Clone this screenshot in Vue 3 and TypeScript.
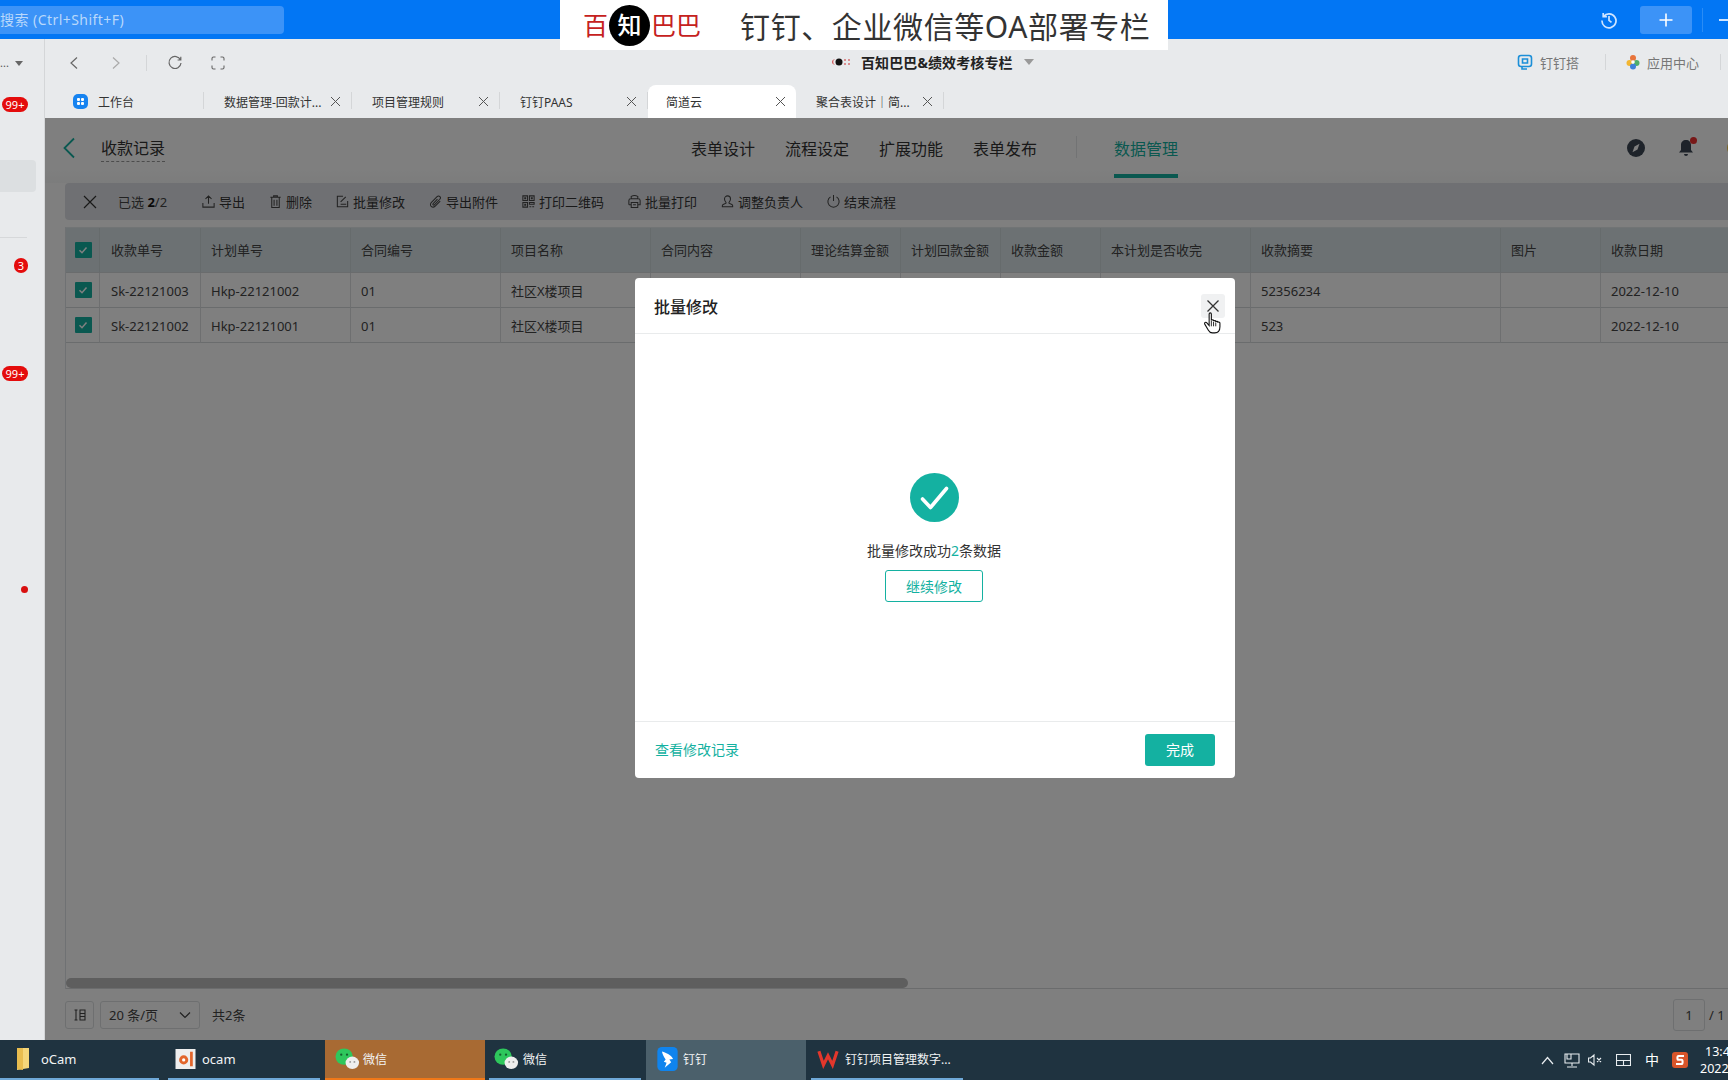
<script setup lang="ts">
interface TabItem { label: string; active?: boolean; home?: boolean }
interface ToolItem { label: string; icon: string }
interface TaskItem { label: string; kind: string; state?: string }

const tabs: TabItem[] = [
  { label: '工作台', home: true },
  { label: '数据管理-回款计...' },
  { label: '项目管理规则' },
  { label: '钉钉PAAS' },
  { label: '简道云', active: true },
  { label: '聚合表设计｜简...' },
]
const navItems = ['表单设计', '流程设定', '扩展功能', '表单发布']
const tools: ToolItem[] = [
  { label: '导出', icon: 'M8 10.500V2M4.800 5.200 8 2l3.200 3.200M2 9.500v4.500h12V9.500' },
  { label: '删除', icon: 'M2.500 3.500h11M6 3.500V2h4v1.500M4 3.500v11h8v-11M6.500 6v6.500M9.500 6v6.500' },
  { label: '批量修改', icon: 'M8.500 2.500H2.500v11h11V7.500M6 11h6M6 8.500 11.500 3' },
  { label: '导出附件', icon: 'M13 7.500l-5.300 5.500c-1.300 1.300-3.200 1.300-4.300.2s-1-2.900.3-4.200l6-6.200c.9-.9 2.200-.9 3-.1s.7 2-.1 2.900L6.800 11.500c-.4.4-1 .4-1.400.1s-.3-1 .1-1.400l4.600-4.800' },
  { label: '打印二维码', icon: 'M2 2h5v5H2zM9 2h5v5H9zM2 9h5v5H2zM9 9h5v2H9zM9 13.500h2M12 13.500h2M4 4h1v1H4zM11 4h1v1h-1zM4 11h1v1H4z' },
  { label: '批量打印', icon: 'M4.500 5V2.500c2-1 5-1 7 0V5M2 11.500V7c0-1.200.8-2 2-2h8c1.200 0 2 .8 2 2v4.500h-2.500M4.500 11.500H2M4.500 9h7v5.500h-7zM6.500 11.500h3' },
  { label: '调整负责人', icon: 'M8 2a3.200 3.200 0 0 1 3.200 3.200c0 2.300-1.700 3.300-1.700 4.300 0 .8 4 1.200 4 2.800v1.200h-11v-1.200c0-1.600 4-2 4-2.800 0-1-1.700-2-1.700-4.300A3.200 3.200 0 0 1 8 2z' },
  { label: '结束流程', icon: 'M8 1v6.500M4.800 3a6 6 0 1 0 6.400 0' },
]
const columns = ['收款单号', '计划单号', '合同编号', '项目名称', '合同内容', '理论结算金额', '计划回款金额', '收款金额', '本计划是否收完', '收款摘要', '图片', '收款日期']
const rows: string[][] = [
  ['Sk-22121003', 'Hkp-22121002', '01', '社区X楼项目', '', '', '', '', '', '52356234', '', '2022-12-10'],
  ['Sk-22121002', 'Hkp-22121001', '01', '社区X楼项目', '', '', '', '', '', '523', '', '2022-12-10'],
]
const taskItems: TaskItem[] = [
  { label: 'oCam', kind: 'folder' },
  { label: 'ocam', kind: 'ocam' },
  { label: '微信', kind: 'wechat wx-a', state: 'alert' },
  { label: '微信', kind: 'wechat wx-b' },
  { label: '钉钉', kind: 'ding', state: 'active' },
  { label: '钉钉项目管理数字...', kind: 'wps' },
]
</script>

<template>
  <div class="screen">
    <header class="titlebar">
      <div class="search">搜索 (Ctrl+Shift+F)</div>
      <div class="title-actions">
        <svg class="hist" width="18" height="18" viewBox="0 0 18 18" fill="none" stroke="#cfe4ff" stroke-width="1.700">
          <path d="M3.500 5.500A7 7 0 1 1 2 9.500M3.200 2v3.700h3.700M9 5v4.300l2.500 2" />
        </svg>
        <div class="plus">
          <svg width="16" height="16" viewBox="0 0 16 16" stroke="#fff" stroke-width="1.600"><path d="M8 1.500v13M1.500 8h13" /></svg>
        </div>
        <div class="bar-sep"></div>
        <div class="dash"></div>
      </div>
    </header>

    <div class="banner">
      <div class="brand">
        <span>百</span><b class="brand-dot">知</b><span>巴巴</span>
      </div>
      <div class="banner-text">钉钉、企业微信等OA部署专栏</div>
    </div>

    <div class="main">
      <aside class="sidebar">
        <div class="side-top">...<i class="mini-caret"></i></div>
        <div class="side-row first-badge"><span class="badge">99+</span></div>
        <div class="side-selected"></div>
        <div class="side-line"></div>
        <div class="side-row three"><span class="badge round">3</span></div>
        <div class="side-row second-badge"><span class="badge">99+</span></div>
        <div class="side-row dot-row"><span class="red-dot"></span></div>
      </aside>

      <section class="workspace">
        <div class="browserbar">
          <div class="browser-left">
            <svg width="12" height="14" viewBox="0 0 12 14" fill="none" stroke="#666" stroke-width="1.200"><path d="M9 1.500 3 7l6 5.500" /></svg>
            <svg class="fwd" width="12" height="14" viewBox="0 0 12 14" fill="none" stroke="#aaa" stroke-width="1.200"><path d="M3 1.500 9 7l-6 5.500" /></svg>
            <span class="vsep"></span>
            <svg class="refresh" width="16" height="16" viewBox="0 0 16 16" fill="none" stroke="#666" stroke-width="1.200"><path d="M13.500 5A6 6 0 1 0 14 8M13.800 1.800V5h-3.200" /></svg>
            <svg class="full" width="14" height="14" viewBox="0 0 14 14" fill="none" stroke="#666" stroke-width="1.100"><path d="M1 4.500V2.500C1 1.500 1.500 1 2.500 1h2M9.500 1h2c1 0 1.500.5 1.500 1.500v2M13 9.500v2c0 1-.5 1.500-1.500 1.500h-2M4.500 13h-2C1.500 13 1 12.500 1 11.500v-2" /></svg>
          </div>
          <div class="browser-mid">
            <svg width="20" height="10" viewBox="0 0 20 10"><path d="M3 2.500a3 3 0 0 0 0 5" fill="none" stroke="#c33" /><circle cx="8" cy="5" r="3.500" fill="#111" /><path d="M13 3h2M13 7h2M17 3h2M17 7h2" stroke="#c33" /></svg>
            <span class="org">百知巴巴&amp;绩效考核专栏</span>
            <i class="mini-caret big"></i>
          </div>
          <div class="browser-right">
            <svg width="16" height="16" viewBox="0 0 16 16" fill="none" stroke="#1c8fd8" stroke-width="1.600"><rect x="1.500" y="1.500" width="13" height="11" rx="2.500" /><path d="M5 12.500v2.500h5M5.500 9V5h5v4z" /></svg>
            <span class="bb-label">钉钉搭</span>
            <span class="vsep wide"></span>
            <svg width="14" height="16" viewBox="0 0 14 16"><circle cx="7" cy="4" r="3" fill="#e8743b" /><circle cx="3.500" cy="9" r="3" fill="#f2b632" /><circle cx="10.500" cy="9" r="3" fill="#4fae6a" /><circle cx="7" cy="12.500" r="3" fill="#3f80d8" /><circle cx="7" cy="8" r="1.800" fill="#fff" /></svg>
            <span class="bb-label">应用中心</span>
            <span class="vsep wide end"></span>
          </div>
        </div>

        <nav class="tabs">
          <div v-for="t in tabs" :key="t.label" class="tab" :class="{ active: t.active }">
            <svg v-if="t.home" class="home" width="15" height="15" viewBox="0 0 15 15">
              <rect width="15" height="15" rx="5" fill="#1683f0" />
              <rect x="4" y="4" width="3" height="3" rx="1" fill="#fff" /><rect x="8" y="4" width="3" height="3" rx="1" fill="#fff" />
              <rect x="4" y="8" width="3" height="3" rx="1" fill="#fff" /><rect x="8" y="8" width="3" height="3" rx="1" fill="#fff" />
            </svg>
            <span class="tab-label">{{ t.label }}</span>
            <svg v-if="!t.home" class="tab-x" width="11" height="11" viewBox="0 0 11 11" stroke="#555" stroke-width="1"><path d="M1 1l9 9M10 1l-9 9" /></svg>
          </div>
        </nav>

        <div class="content">
          <div class="formnav">
            <svg class="back" width="14" height="22" viewBox="0 0 14 22" fill="none" stroke="#14b1a1" stroke-width="1.800"><path d="M12 1.500 2.500 11 12 20.500" /></svg>
            <span class="form-title">收款记录</span>
            <div class="nav-center">
              <span v-for="n in navItems" :key="n" class="nav-link">{{ n }}</span>
              <span class="nav-sep"></span>
              <span class="nav-link current">数据管理</span>
            </div>
            <div class="nav-right">
              <svg width="18" height="18" viewBox="0 0 18 18"><circle cx="9" cy="9" r="9" fill="#3c4654" /><path d="M12.500 4.800 10.500 10.500 5.500 13.200 7.500 7.500z" fill="#fff" /></svg>
              <span class="bell">
                <svg width="16" height="18" viewBox="0 0 16 18"><path d="M8 1c3 0 5 2 5 5v5l2 2.500H1L3 11V6c0-3 2-5 5-5zM6 15h4a2 2 0 0 1-4 0z" fill="#3c4654" /></svg>
                <i class="bell-dot"></i>
              </span>
              <span class="avatar"></span>
            </div>
          </div>

          <div class="toolbar">
            <svg class="tool-x" width="14" height="14" viewBox="0 0 14 14" stroke="#333" stroke-width="1.200"><path d="M1 1l12 12M13 1 1 13" /></svg>
            <span class="picked">已选 <b>2</b>/2</span>
            <div class="tool-list">
              <span v-for="t in tools" :key="t.label" class="tool">
                <svg width="15" height="15" viewBox="0 0 16 16" fill="none" stroke="#444" stroke-width="1.100"><path :d="t.icon" /></svg>
                {{ t.label }}
              </span>
            </div>
          </div>

          <div class="table-wrap">
            <div class="grid head">
              <div class="cell chk"><span class="checkbox"><svg width="12" height="12" viewBox="0 0 12 12" fill="none" stroke="#fff" stroke-width="1.500"><path d="M2.500 6.200 5 8.700 9.500 3.500" /></svg></span></div>
              <div v-for="c in columns" :key="c" class="cell">{{ c }}</div>
              <div class="cell"></div>
            </div>
            <div v-for="(r, i) in rows" :key="i" class="grid row">
              <div class="cell chk"><span class="checkbox"><svg width="12" height="12" viewBox="0 0 12 12" fill="none" stroke="#fff" stroke-width="1.500"><path d="M2.500 6.200 5 8.700 9.500 3.500" /></svg></span></div>
              <div v-for="(v, j) in r" :key="j" class="cell">{{ v }}</div>
              <div class="cell"></div>
            </div>
            <div class="table-fill"></div>
            <div class="hscroll"><span class="thumb"></span></div>
          </div>

          <div class="pager">
            <span class="pg-icon">
              <svg width="12" height="12" viewBox="0 0 12 12" fill="none" stroke="#444" stroke-width="1.100"><path d="M.5 1h3M2 1v10M.5 11h3M6 1h5v10H6zM6 4.500h5M6 7.500h5" /></svg>
            </span>
            <span class="pg-select">20 条/页
              <svg width="12" height="8" viewBox="0 0 12 8" fill="none" stroke="#444" stroke-width="1.200"><path d="M1 1.500 6 6.500l5-5" /></svg>
            </span>
            <span class="pg-total">共2条</span>
            <span class="pg-right"><span class="pg-input">1</span><span class="pg-of">/ 1</span></span>
          </div>

          <div class="mask"></div>
        </div>
      </section>
    </div>

    <footer class="taskbar">
      <div v-for="(t, i) in taskItems" :key="i" class="task" :class="[t.state, t.kind]">
        <svg v-if="t.kind === 'folder'" width="14" height="24" viewBox="0 0 14 24"><path d="M1 1h12v20l-12 2z" fill="#f4d67a" /><path d="M1 1h6v22l-6-1z" fill="#e8bd4f" /></svg>
        <svg v-else-if="t.kind === 'ocam'" width="21" height="20" viewBox="0 0 22 22"><rect width="22" height="22" fill="#eee" /><circle cx="9" cy="12" r="5" fill="#e2652b" /><circle cx="9" cy="12" r="1.800" fill="#fff" /><rect x="16" y="3" width="3" height="16" fill="#e2652b" /></svg>
        <svg v-else-if="t.kind.startsWith('wechat')" width="25" height="24" viewBox="0 0 26 24"><ellipse cx="9.500" cy="9.500" rx="9" ry="8.500" fill="#2ec75c" /><circle cx="6.500" cy="7.500" r="1.200" fill="#14602e" /><circle cx="12.500" cy="7.500" r="1.200" fill="#14602e" /><ellipse cx="18" cy="16" rx="7" ry="6.500" fill="#eee" /><circle cx="15.800" cy="15" r="1" fill="#999" /><circle cx="20.200" cy="15" r="1" fill="#999" /></svg>
        <svg v-else-if="t.kind === 'ding'" width="21" height="24" viewBox="0 0 22 26"><rect width="22" height="26" rx="5" fill="#0f84ee" /><path d="M5 5c5 1.500 10 4 12 8l-4 .5 2 3-7 6 2-5.500-3-1 2-2.500C7 11 5.500 8 5 5z" fill="#fff" /></svg>
        <svg v-else width="24" height="20" viewBox="0 0 24 22" fill="none" stroke="#e3372c" stroke-width="3.500"><path d="M2 2.500l5 15 5-10 5 10 5-15" /></svg>
        <span class="task-label">{{ t.label }}</span>
      </div>
      <div class="tray">
        <svg width="13" height="9" viewBox="0 0 13 9" fill="none" stroke="#e8edf0" stroke-width="1.200"><path d="M1 8l5.500-6.500L12 8" /></svg>
        <svg class="t-net" width="16" height="15" viewBox="0 0 16 15" fill="none" stroke="#e8edf0" stroke-width="1.100"><path d="M1 1h14v9H1zM8 10v3M3 14h10M3 1v5h4V1" /></svg>
        <svg class="t-vol" width="14" height="14" viewBox="0 0 14 14" fill="none" stroke="#e8edf0" stroke-width="1.100"><path d="M.5 5v4h2L6 12V2L2.500 5zM9 5l4 4M13 5 9 9" /></svg>
        <svg class="t-kb" width="15" height="12" viewBox="0 0 15 12" fill="none" stroke="#e8edf0" stroke-width="1.100"><path d="M.5.500h14v11H.5zM.5 6.500h14M7.500 6.500v5" /></svg>
        <span class="ime">中</span>
        <svg class="t-s" width="16" height="16" viewBox="0 0 16 16"><rect width="16" height="16" rx="3" fill="#d8552a" /><path d="M12 4H6.500C5 4 5 7.800 6.500 7.800h3c1.500 0 1.500 4.200 0 4.200H4" fill="none" stroke="#fff" stroke-width="2" /></svg>
        <span class="clock"><span>13:4</span><span>2022</span></span>
      </div>
    </footer>

    <div class="modal">
      <div class="modal-head">
        <span class="modal-title">批量修改</span>
        <span class="modal-close">
          <svg width="14" height="14" viewBox="0 0 14 14" stroke="#333" stroke-width="1.300"><path d="M1.500 1.500l11 11M12.500 1.500l-11 11" /></svg>
        </span>
      </div>
      <div class="modal-body">
        <svg width="49" height="49" viewBox="0 0 49 49">
          <circle cx="24.500" cy="24.500" r="24.500" fill="#14b1a1" />
          <path d="M12.500 26l8 8.500 16-19" fill="none" stroke="#fff" stroke-width="3.600" stroke-linecap="round" stroke-linejoin="round" />
        </svg>
        <p class="result">批量修改成功<em>2</em>条数据</p>
        <button class="btn-outline">继续修改</button>
      </div>
      <div class="modal-foot">
        <span class="link">查看修改记录</span>
        <button class="btn-solid">完成</button>
      </div>
    </div>

    <svg class="cursor" width="20" height="22" viewBox="0 0 18 20">
      <path d="M5.500 1.800c0-1.300 2-1.300 2 0v6c0-.9 2-.9 2 0v.7c0-.9 2-.9 2 0v.7c0-.9 2-.9 2 0 .9-.3 1.800.2 1.800 1v3.300c0 3-1.500 5.500-4.800 5.500H8.500c-1.800 0-2.800-.8-3.700-2.500L1.500 11c-.7-1.200.9-2.200 1.900-1.200l2.100 2.400z" fill="#fff" stroke="#111" stroke-width="1" />
      <path d="M7.500 8v5M9.500 9v4M11.500 9.500V13" stroke="#111" stroke-width=".8" />
    </svg>
  </div>
</template>

<style scoped>
.screen {
  position: relative;
  width: 1728px;
  height: 1080px;
  overflow: hidden;
  display: flex;
  flex-direction: column;
  font-family: "Noto Sans", "Noto Sans CJK SC", sans-serif;
  font-size: 13px;
  color: #333;
  background: #e8eaec;
}

/* title bar */
.titlebar {
  height: 39px;
  flex: none;
  background: #0276f4;
  display: flex;
  align-items: center;
  justify-content: space-between;
}
.search {
  width: 284px;
  height: 28px;
  line-height: 28px;
  background: #3c93f7;
  border-radius: 0 4px 4px 0;
  color: #b9d8fb;
  font-size: 14px;
  letter-spacing: 0.45px;
  white-space: nowrap;
}
.title-actions { display: flex; align-items: center; }
.hist { margin-right: 22px; }
.plus {
  width: 52px;
  height: 28px;
  border-radius: 3px;
  background: #3c93f7;
  display: flex;
  align-items: center;
  justify-content: center;
}
.bar-sep { width: 1px; height: 24px; background: #2a8cf5; margin-left: 10px; }
.dash { width: 9px; height: 2px; background: #cfe4ff; margin-left: 16px; }

.banner {
  position: absolute;
  left: 560px;
  top: 0;
  width: 608px;
  height: 50px;
  background: #fff;
  display: flex;
  align-items: center;
  z-index: 5;
}
.brand {
  margin-left: 23px;
  display: flex;
  align-items: center;
  font-size: 25px;
  color: #c5211d;
  line-height: 40px;
}
.brand-dot {
  width: 41px;
  height: 41px;
  margin: 0 1px;
  border-radius: 50%;
  background: #000;
  color: #fff;
  text-align: center;
  font-weight: 500;
  font-size: 24px;
}
.banner-text { margin-left: 39px; font-size: 30px; letter-spacing: 0.6px; color: #333; white-space: nowrap; }

/* shell */
.main { flex: 1; display: flex; min-height: 0; }
.sidebar {
  width: 44px;
  flex: none;
  background: #e8eaec;
  border-right: 1px solid #d4d6d8;
  display: flex;
  flex-direction: column;
}
.side-top {
  height: 24px;
  margin-top: 12px;
  line-height: 24px;
  font-size: 11px;
  color: #555;
  display: flex;
  align-items: center;
}
.mini-caret {
  display: inline-block;
  margin-left: 6px;
  border-left: 4px solid transparent;
  border-right: 4px solid transparent;
  border-top: 5px solid #666;
}
.mini-caret.big { margin-left: 11px; border-left-width: 5px; border-right-width: 5px; border-top: 6px solid #999; }
.side-row { display: flex; justify-content: flex-end; padding-right: 16px; }
.first-badge { margin-top: 22px; }
.badge {
  width: 26px;
  height: 15px;
  line-height: 15px;
  border-radius: 8px;
  background: #e40c0c;
  color: #fff;
  font-size: 11px;
  text-align: center;
}
.badge.round { width: 14px; }
.side-selected {
  margin-top: 48px;
  width: 36px;
  height: 32px;
  border-radius: 0 4px 4px 0;
  background: #dcdfe1;
}
.side-line { margin-top: 45px; width: 27px; height: 1px; background: #d6d8da; }
.three { margin-top: 20px; }
.second-badge { margin-top: 93px; }
.dot-row { margin-top: 205px; padding-right: 16px; }
.red-dot { width: 7px; height: 7px; border-radius: 50%; background: #d80f0f; }

.workspace { flex: 1; min-width: 0; display: flex; flex-direction: column; }
.browserbar {
  height: 46px;
  flex: none;
  display: flex;
  align-items: center;
  box-sizing: border-box;
}
.browser-left { display: flex; align-items: center; margin-left: 23px; width: 693px; flex: none; padding-top: 2px; }
.fwd { margin-left: 30px; }
.vsep { width: 1px; height: 16px; background: #d4d6d8; display: inline-block; }
.browser-left .vsep { margin-left: 24px; }
.refresh { margin-left: 20px; }
.full { margin-left: 28px; }
.browser-mid { display: flex; align-items: center; margin-left: 70px; }
.org { font-weight: 700; font-size: 14px; color: #222; letter-spacing: 0.1px; margin-left: 10px; }
.browser-right { margin-left: auto; display: flex; align-items: center; color: #777; }
.bb-label { margin-left: 7px; font-size: 13px; color: #777; }
.vsep.wide { margin: 0 20px 0 26px; }
.vsep.end { margin: 0 7px 0 21px; }

.tabs { height: 33px; flex: none; display: flex; padding-left: 11px; }
.tab {
  width: 148px;
  height: 33px;
  padding: 0 10px 0 20px;
  display: flex;
  align-items: center;
  font-size: 12px;
  color: #333;
  border-right: 1px solid #d4d6d8;
  box-sizing: border-box;
  border-image: linear-gradient(transparent 8px, #d4d6d8 8px, #d4d6d8 24px, transparent 24px) 1;
}
.tab:first-child { padding-left: 17px; }
.tab.active {
  background: #fff;
  border-radius: 8px 8px 0 0;
  border: 0;
  border-image: none;
  padding-left: 18px;
}
.home { margin-right: 10px; }
.tab-label { flex: 1; white-space: nowrap; overflow: hidden; }
.tab-x { flex: none; }

/* content */
.content {
  position: relative;
  flex: 1;
  min-height: 0;
  background: #fff;
  display: flex;
  flex-direction: column;
  overflow: hidden;
}
.formnav {
  height: 65px;
  flex: none;
  display: flex;
  align-items: center;
  position: relative;
  background: linear-gradient(#fff 50px, #f8f9f9);
  box-sizing: border-box;
}
.back { margin-left: 17px; margin-top: -6px; }
.form-title {
  margin-left: 25px;
  margin-top: -4px;
  font-size: 16px;
  color: #333;
  line-height: 26px;
  border-bottom: 1px dashed #999;
}
.nav-center {
  position: absolute;
  left: 646px;
  top: 0;
  height: 64px;
  display: flex;
  align-items: center;
}
.nav-link {
  font-size: 16px;
  color: #333;
  margin-right: 30px;
  padding-bottom: 3px;
  line-height: 28px;
}
.nav-sep { width: 1px; height: 22px; background: #e4e6e8; margin: -6px 37px 0 9px; }
.nav-link.current {
  color: #14b1a1;
  position: relative;
  margin-right: 0;
}
.nav-link.current::after {
  content: "";
  position: absolute;
  left: 0;
  right: 0;
  bottom: -12px;
  height: 4px;
  background: #14b1a1;
}
.nav-right {
  position: absolute;
  left: 1582px;
  top: 21px;
  display: flex;
  align-items: center;
  gap: 33px;
}
.bell { position: relative; display: flex; }
.bell-dot { position: absolute; right: -3px; top: -2px; width: 7px; height: 7px; border-radius: 50%; background: #f03030; }
.avatar { width: 16px; height: 16px; border-radius: 50%; background: #f2c84b; flex: none; }

.toolbar {
  height: 37px;
  flex: none;
  margin-left: 20px;
  background: #dfe1e6;
  border-radius: 4px 0 0 4px;
  display: flex;
  align-items: center;
}
.tool-x { margin-left: 18px; }
.picked { margin-left: 21px; color: #444; width: 83px; flex: none; }
.picked b { color: #111; }
.tool-list { display: flex; gap: 23px; }
.tool { display: inline-flex; align-items: center; gap: 3px; color: #333; white-space: nowrap; }

.table-wrap {
  flex: 1;
  min-height: 0;
  margin: 7px 0 0 20px;
  border-left: 1px solid #dfe3e6;
  display: flex;
  flex-direction: column;
}
.grid {
  display: grid;
  grid-template-columns: 34px 101px 150px 150px 150px 150px 100px 100px 100px 150px 250px 100px 150px 30px;
  width: max-content;
}
.head { height: 46px; background: #d8e3e7; flex: none; border-top: 1px solid #e3e8ea; box-sizing: border-box; }
.row { height: 35px; flex: none; background: #fff; }
.cell {
  padding-left: 10px;
  display: flex;
  align-items: center;
  font-size: 13px;
  color: #444;
  border-right: 1px solid #dcdfe1;
  border-bottom: 1px solid #d4d8da;
  white-space: nowrap;
  box-sizing: border-box;
}
.head .cell { border-right-color: #cdd6d9; padding-bottom: 2px; }
.row .cell { padding-top: 1px; }
.cell:nth-child(2) { padding-left: 11px; }
.cell.chk, .head .cell.chk, .row .cell.chk { padding: 0 0 0 1px; justify-content: center; }
.checkbox {
  width: 17px;
  height: 16px;
  background: #14b1a1;
  border-radius: 1px;
  display: flex;
  align-items: center;
  justify-content: center;
}
.table-fill { flex: 1; }
.hscroll { height: 10px; flex: none; border-bottom: 1px solid #d6d8da; }
.thumb { display: block; width: 842px; height: 10px; border-radius: 5px; background: #bdbdbd; }

.pager {
  height: 51px;
  flex: none;
  margin-left: 20px;
  display: flex;
  align-items: center;
  gap: 6px;
}
.pg-icon, .pg-select, .pg-input {
  border: 1px solid #dcdfe1;
  border-radius: 3px;
  height: 28px;
  box-sizing: border-box;
  display: flex;
  align-items: center;
}
.pg-icon { width: 29px; justify-content: center; }
.pg-select { width: 100px; padding: 0 8px; justify-content: space-between; color: #444; }
.pg-total { margin-left: 6px; color: #444; }
.pg-right { margin-left: auto; display: flex; align-items: center; gap: 4px; color: #444; }
.pg-input { width: 32px; height: 32px; justify-content: center; }
.pg-of { width: 19px; white-space: nowrap; }

.mask { position: absolute; inset: 0; background: rgba(0, 0, 0, 0.5); }

/* taskbar */
.taskbar {
  height: 40px;
  flex: none;
  background: #1f3340;
  display: flex;
  color: #fff;
}
.task {
  flex: none;
  height: 40px;
  box-sizing: border-box;
  display: flex;
  align-items: center;
  font-size: 12px;
  border-bottom: 2px solid #6fa9d8;
  color: #f2f4f5;
}
.task.folder { width: 159px; padding-left: 16px; gap: 11px; font-size: 13px; }
.task.ocam { width: 152px; margin-left: 9px; padding-left: 7px; gap: 6px; font-size: 13px; }
.task.wx-a { width: 160px; margin-left: 5px; padding-left: 10px; gap: 3px; }
.task.wx-b { width: 152px; margin-left: 4px; padding-left: 5px; gap: 4px; }
.task.ding { width: 160px; margin-left: 5px; padding-left: 11px; gap: 5px; border-bottom-color: transparent; }
.task.wps { width: 152px; margin-left: 5px; padding-left: 5px; gap: 5px; }
.task.alert { background: #a86a33; border-bottom-color: #f07818; }
.task.active { background: #4b606b; }
.task-label { white-space: nowrap; }
.tray {
  flex: none;
  margin-left: 578px;
  height: 40px;
  display: flex;
  align-items: center;
}
.tray svg { flex: none; }
.t-net { margin-left: 10px; }
.t-vol { margin-left: 8px; }
.t-kb { margin-left: 14px; }
.ime { margin-left: 14px; font-size: 14px; width: 14px; flex: none; line-height: 16px; }
.t-s { margin-left: 13px; }
.clock {
  flex: none;
  margin-left: 12px;
  display: flex;
  flex-direction: column;
  font-size: 12.5px;
  line-height: 17px;
  white-space: nowrap;
}
.clock span:first-child { margin-left: 5px; }

/* dialog */
.modal {
  position: absolute;
  left: 635px;
  top: 278px;
  width: 600px;
  height: 500px;
  background: #fff;
  border-radius: 4px;
  display: flex;
  flex-direction: column;
  z-index: 4;
}
.modal-head {
  height: 56px;
  flex: none;
  border-bottom: 1px solid #e9ebec;
  box-sizing: border-box;
  display: flex;
  align-items: center;
  justify-content: space-between;
  padding: 0 10px 0 19px;
}
.modal-title { font-size: 16px; color: #222; font-weight: 500; }
.modal-close {
  width: 24px;
  height: 24px;
  border-radius: 3px;
  background: #f0f1f2;
  display: flex;
  align-items: center;
  justify-content: center;
}
.modal-body {
  flex: 1;
  display: flex;
  flex-direction: column;
  align-items: center;
  padding: 139px 2px 0 0;
  box-sizing: border-box;
}
.result { margin: 18px 0 0; font-size: 14px; line-height: 22px; color: #333; }
.result em { font-style: normal; color: #14b1a1; }
.btn-outline {
  margin-top: 8px;
  width: 98px;
  height: 32px;
  background: #fff;
  border: 1px solid #14b1a1;
  border-radius: 3px;
  color: #14b1a1;
  font: inherit;
  font-size: 14px;
}
.modal-foot {
  height: 57px;
  flex: none;
  border-top: 1px solid #e9ebec;
  box-sizing: border-box;
  display: flex;
  align-items: center;
  justify-content: space-between;
  padding: 0 20px 0 20px;
}
.link { color: #14b1a1; font-size: 14px; margin-top: -2px; }
.btn-solid {
  width: 70px;
  height: 32px;
  border: 0;
  border-radius: 3px;
  background: #14b1a1;
  color: #fff;
  font: inherit;
  font-size: 14px;
  padding: 0 0 2px;
}
.cursor { position: absolute; left: 1203px; top: 312px; z-index: 6; }
</style>
